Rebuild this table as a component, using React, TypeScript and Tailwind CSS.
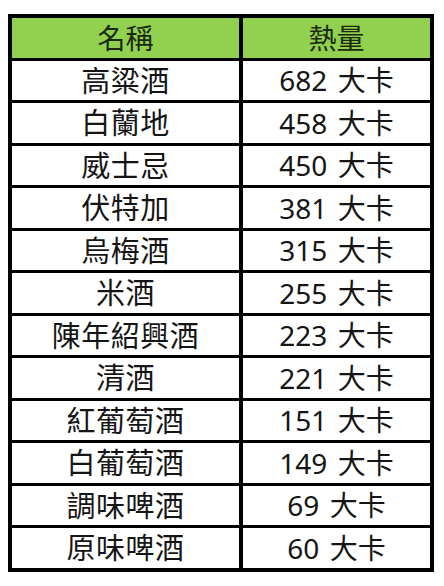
const rows: [string, string][] = [
  ["高粱酒", "682 大卡"],
  ["白蘭地", "458 大卡"],
  ["威士忌", "450 大卡"],
  ["伏特加", "381 大卡"],
  ["烏梅酒", "315 大卡"],
  ["米酒", "255 大卡"],
  ["陳年紹興酒", "223 大卡"],
  ["清酒", "221 大卡"],
  ["紅葡萄酒", "151 大卡"],
  ["白葡萄酒", "149 大卡"],
  ["調味啤酒", "69 大卡"],
  ["原味啤酒", "60 大卡"],
]

export default function App() {
  return (
    <div
      className="w-[444px] h-[586px] bg-white pt-[14px] pl-[8px]"
      style={{ fontFamily: '"Noto Sans", "Noto Sans CJK TC", sans-serif' }}
    >
      <div className="grid w-[426px] grid-cols-[227px_187px] gap-x-[4px] gap-y-[3px] bg-black p-[4px] text-[#151515]">
        <Cell header>名稱</Cell>
        <Cell header>熱量</Cell>
        {rows.map(([name, kcal]) => (
          <Row key={name} name={name} kcal={kcal} />
        ))}
      </div>
    </div>
  )
}

function Row(props: { name: string; kcal: string }) {
  return (
    <>
      <Cell name>{props.name}</Cell>
      <Cell>{props.kcal}</Cell>
    </>
  )
}

function Cell(props: { children: React.ReactNode; header?: boolean; name?: boolean }) {
  if (props.header) {
    return (
      <div className="flex h-[39.5px] items-center justify-center bg-[#92d050] text-[28px] leading-none text-[#1a2a0e]">
        {props.children}
      </div>
    )
  }
  return (
    <div
      className={
        props.name
          ? "flex h-[39.5px] items-center justify-center bg-white text-[29px] leading-none tracking-[0.5px]"
          : "flex h-[39.5px] items-center justify-center bg-white text-[28px] leading-none [word-spacing:3px]"
      }
    >
      {props.children}
    </div>
  )
}
